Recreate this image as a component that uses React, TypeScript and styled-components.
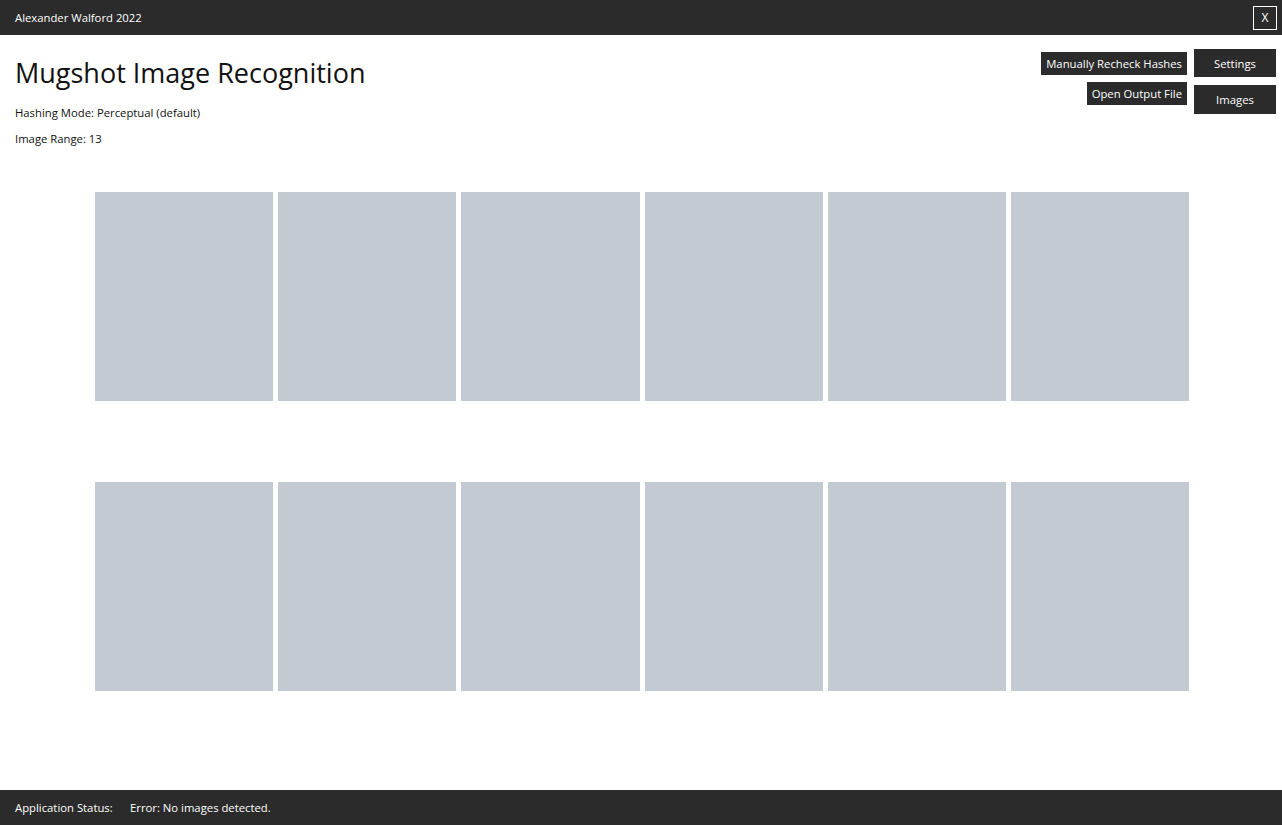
import React from "react";
import styled, { createGlobalStyle } from "styled-components";

const Global = createGlobalStyle`
  html, body { margin: 0; padding: 0; }
  body { font-family: "Open Sans", "Noto Sans", sans-serif; background: #ffffff; }
  * { box-sizing: border-box; }
`;

const Window = styled.div`
  width: 1282px;
  height: 825px;
  display: flex;
  flex-direction: column;
  background: #ffffff;
  overflow: hidden;
`;

const Bar = styled.div`
  height: 35px;
  flex: 0 0 35px;
  background: #2b2b2b;
  color: #ffffff;
  display: flex;
  align-items: center;
  padding: 0 5px 0 15px;
  font-size: 11.3px;
  white-space: nowrap;
`;

const BarTitle = styled.span`
  flex: 1;
`;

const CloseButton = styled.div`
  width: 24px;
  height: 24px;
  border: 1px solid #ffffff;
  display: flex;
  align-items: center;
  justify-content: center;
  font-size: 12px;
  color: #ffffff;
`;

const Main = styled.div`
  flex: 1;
  display: flex;
  flex-direction: column;
`;

const Header = styled.div`
  display: flex;
  justify-content: space-between;
  align-items: flex-start;
`;

const Info = styled.div`
  display: flex;
  flex-direction: column;
  padding: 20px 0 0 15px;
`;

const Title = styled.h1`
  margin: 0;
  font-size: 27px;
  font-weight: 400;
  line-height: 36px;
  color: #111111;
`;

const InfoLine = styled.div<{ $top: number }>`
  font-size: 11.3px;
  line-height: 16px;
  color: #111111;
  margin-top: ${(p) => p.$top}px;
`;

const Actions = styled.div`
  display: flex;
  gap: 7px;
  padding: 14px 6px 0 0;
`;

const ActionColumn = styled.div<{ $pad: number; $gap: number; $end?: boolean }>`
  display: flex;
  flex-direction: column;
  align-items: ${(p) => (p.$end ? "flex-end" : "stretch")};
  padding-top: ${(p) => p.$pad}px;
  gap: ${(p) => p.$gap}px;
`;

const Button = styled.div<{ $h: number; $w?: number }>`
  height: ${(p) => p.$h}px;
  ${(p) => (p.$w ? `width: ${p.$w}px;` : "padding: 0 5px;")}
  background: #2b2b2b;
  color: #ffffff;
  font-size: 11.3px;
  display: flex;
  align-items: center;
  justify-content: center;
  white-space: nowrap;
`;

const Gallery = styled.div`
  display: grid;
  width: 1094px;
  grid-template-columns: repeat(6, 1fr);
  grid-auto-rows: 209px;
  column-gap: 5px;
  row-gap: 81px;
  margin: 45px 0 0 95px;
`;

const Slot = styled.div`
  background: #c3cad2;
`;

const StatusBar = styled(Bar)`
  gap: 16px;
`;

const StatusLabel = styled.span`
  width: 99px;
`;

export default function App() {
  return (
    <>
      <Global />
      <Window>
        <Bar>
          <BarTitle>Alexander Walford 2022</BarTitle>
          <CloseButton>X</CloseButton>
        </Bar>
        <Main>
          <Header>
            <Info>
              <Title>Mugshot Image Recognition</Title>
              <InfoLine $top={14}>Hashing Mode: Perceptual (default)</InfoLine>
              <InfoLine $top={10}>Image Range: 13</InfoLine>
            </Info>
            <Actions>
              <ActionColumn $pad={3} $gap={7} $end>
                <Button $h={23}>Manually Recheck Hashes</Button>
                <Button $h={23}>Open Output File</Button>
              </ActionColumn>
              <ActionColumn $pad={0} $gap={8}>
                <Button $h={28} $w={82}>Settings</Button>
                <Button $h={29} $w={82}>Images</Button>
              </ActionColumn>
            </Actions>
          </Header>
          <Gallery>
            {Array.from({ length: 12 }).map((_, i) => (
              <Slot key={i} />
            ))}
          </Gallery>
        </Main>
        <StatusBar>
          <StatusLabel>Application Status:</StatusLabel>
          <span>Error: No images detected.</span>
        </StatusBar>
      </Window>
    </>
  );
}
